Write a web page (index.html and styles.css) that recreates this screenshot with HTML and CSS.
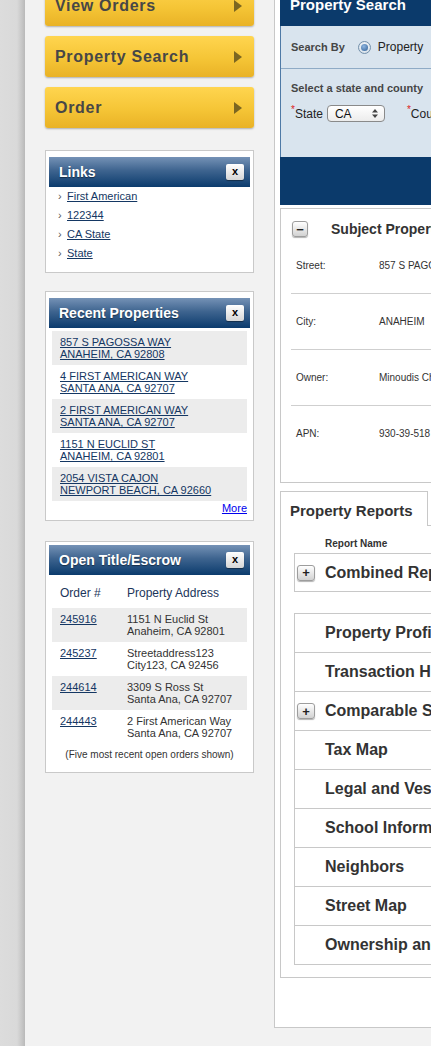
FILE: index.html
```html
<!DOCTYPE html>
<html lang="en">
<head>
<meta charset="utf-8">
<title>Property Search</title>
<link rel="stylesheet" href="styles.css">
</head>
<body>
<div class="page">
  <div class="strip"></div>
  <div class="content">
    <aside class="sidebar">
      <a class="nav-btn" href="#">View Orders<span class="arrow"></span></a>
      <a class="nav-btn" href="#">Property Search<span class="arrow"></span></a>
      <a class="nav-btn" href="#">Order<span class="arrow"></span></a>

      <section class="box box-links">
        <header class="box-head"><span>Links</span><span class="close">x</span></header>
        <ul class="links">
          <li><span class="chev">&#8250;</span><a href="#">First American</a></li>
          <li><span class="chev">&#8250;</span><a href="#">122344</a></li>
          <li><span class="chev">&#8250;</span><a href="#">CA State</a></li>
          <li><span class="chev">&#8250;</span><a href="#">State</a></li>
        </ul>
      </section>

      <section class="box box-recent">
        <header class="box-head"><span>Recent Properties</span><span class="close">x</span></header>
        <ul class="recent">
          <li><a href="#">857 S PAGOSSA WAY<br>ANAHEIM, CA 92808</a></li>
          <li><a href="#">4 FIRST AMERICAN WAY<br>SANTA ANA, CA 92707</a></li>
          <li><a href="#">2 FIRST AMERICAN WAY<br>SANTA ANA, CA 92707</a></li>
          <li><a href="#">1151 N EUCLID ST<br>ANAHEIM, CA 92801</a></li>
          <li><a href="#">2054 VISTA CAJON<br>NEWPORT BEACH, CA 92660</a></li>
        </ul>
        <div class="more"><a href="#">More</a></div>
      </section>

      <section class="box box-orders">
        <header class="box-head"><span>Open Title/Escrow</span><span class="close">x</span></header>
        <div class="orders-head"><span>Order #</span><span>Property Address</span></div>
        <ul class="orders">
          <li><a href="#">245916</a><span>1151 N Euclid St<br>Anaheim, CA 92801</span></li>
          <li><a href="#">245237</a><span>Streetaddress123<br>City123, CA 92456</span></li>
          <li><a href="#">244614</a><span>3309 S Ross St<br>Santa Ana, CA 92707</span></li>
          <li><a href="#">244443</a><span>2 First American Way<br>Santa Ana, CA 92707</span></li>
        </ul>
        <p class="note">(Five most recent open orders shown)</p>
      </section>
    </aside>

    <main class="panel">
      <section class="search">
        <h1 class="search-head">Property Search</h1>
        <div class="search-body">
          <div class="search-by">
            <span class="label-b">Search By</span>
            <span class="radio"><span class="radio-dot"></span></span>
            <span class="radio-text">Property</span>
          </div>
          <div class="state-sec">
            <div class="label-b">Select a state and county</div>
            <div class="state-row">
              <span class="req">*</span><span class="fld">State</span>
              <span class="select">CA
                <svg class="updown" width="6" height="9" viewBox="0 0 6 9"><path d="M3 0 L6 3.5 H0 Z M0 5.5 H6 L3 9 Z" fill="#444"/></svg>
              </span>
              <span class="req county">*</span><span class="fld">County</span>
            </div>
          </div>
        </div>
        <div class="search-foot"></div>
      </section>

      <section class="subject">
        <div class="subject-title"><span class="mini-btn">&minus;</span><span>Subject Property</span></div>
        <ul class="subject-rows">
          <li><span class="k">Street:</span><span>857 S PAGOSSA WAY</span></li>
          <li><span class="k">City:</span><span>ANAHEIM</span></li>
          <li><span class="k">Owner:</span><span>Minoudis Chris</span></li>
          <li><span class="k">APN:</span><span>930-39-518</span></li>
        </ul>
      </section>

      <section class="reports">
        <div class="tabs"><span class="tab">Property Reports</span></div>
        <div class="reports-body">
          <div class="col-head">Report Name</div>
          <div class="combined"><span class="mini-btn plus">+</span><span>Combined Report</span></div>
          <ul class="report-list">
            <li>Property Profile</li>
            <li>Transaction History</li>
            <li class="with-btn"><span class="mini-btn plus">+</span>Comparable Sales</li>
            <li>Tax Map</li>
            <li>Legal and Vesting</li>
            <li>School Information</li>
            <li>Neighbors</li>
            <li>Street Map</li>
            <li>Ownership and Encumbrance</li>
          </ul>
        </div>
      </section>
    </main>
  </div>
</div>
</body>
</html>
```

FILE: styles.css
```css
html, body {
  margin: 0;
  padding: 0;
  overflow: hidden;
  background: #f2f2f2;
  font-family: "Liberation Sans", Arial, Helvetica, sans-serif;
}

.page {
  display: flex;
  width: 431px;
  height: 1046px;
  overflow: hidden;
  background: #f2f2f2;
}

.strip {
  flex: none;
  width: 25px;
  background: linear-gradient(to right, #dcdcdc 0, #d9d9d9 17px, #c6c6c6 22px, #b9b9b9 25px);
}

.content {
  flex: none;
  display: flex;
  align-items: flex-start;
  gap: 20px;
  padding-left: 20px;
  margin-top: -20px;
}

/* ---------- sidebar ---------- */
.sidebar {
  flex: none;
  width: 209px;
  padding-top: 5px;
  display: flex;
  flex-direction: column;
}

.nav-btn {
  box-sizing: border-box;
  height: 41px;
  display: flex;
  align-items: center;
  justify-content: space-between;
  padding: 0 12px 0 10px;
  border-radius: 3px;
  background: linear-gradient(#ffd54f, #f5c536 55%, #e9b226);
  box-shadow: 0 1px 2px rgba(0, 0, 0, 0.28);
  color: #474747;
  font-weight: bold;
  font-size: 16px;
  letter-spacing: 0.7px;
  text-decoration: none;
}
.nav-btn + .nav-btn { margin-top: 10px; }

.arrow {
  width: 0;
  height: 0;
  border-left: 8px solid #7b6621;
  border-top: 6.5px solid transparent;
  border-bottom: 6.5px solid transparent;
}

.box {
  background: #fff;
  border: 1px solid #c9c9c9;
  padding: 6px 3px 3px;
}
.box-links { margin-top: 22px; }
.box-recent { margin-top: 18px; }
.box-orders { margin-top: 20px; padding-top: 3px; }

.box-head {
  height: 30px;
  display: flex;
  align-items: center;
  justify-content: space-between;
  padding: 0 6px 0 10px;
  background: linear-gradient(#7592b6, #3e648f 45%, #0b3b6d);
  color: #fff;
  font-weight: bold;
  font-size: 14px;
  text-shadow: 0 1px 1px rgba(0, 0, 0, 0.45);
}

.close {
  box-sizing: border-box;
  width: 18px;
  height: 16px;
  display: flex;
  align-items: center;
  justify-content: center;
  border-radius: 2px;
  background: linear-gradient(#ffffff, #d6d6d6);
  box-shadow: 0 1px 1px rgba(0, 0, 0, 0.4);
  color: #000;
  font-size: 11px;
  font-weight: bold;
  text-shadow: none;
  line-height: 1;
  padding-bottom: 1px;
}

a { color: #143763; }

.links {
  list-style: none;
  margin: 0;
  padding: 0 0 6px 9px;
  font-size: 11px;
  line-height: 19px;
}
.links li { display: flex; height: 19px; }
.chev {
  width: 9px;
  color: #555;
  font-size: 11px;
}

.recent {
  list-style: none;
  margin: 3px 3px 0;
  padding: 0;
  font-size: 11px;
  line-height: 12px;
}
.recent li {
  padding: 5px 8px;
}
.recent li:nth-child(odd) { background: #ececec; }

.more {
  text-align: right;
  font-size: 11px;
  line-height: 14px;
  padding: 0 3px 2px 0;
}
.more a { color: #0000ee; }

.orders-head {
  display: grid;
  grid-template-columns: 67px 1fr;
  padding: 11px 0 8px 8px;
  margin: 0 3px;
  font-size: 12px;
  line-height: 14px;
  color: #1b355b;
}

.orders {
  list-style: none;
  margin: 0 3px;
  padding: 0;
  font-size: 11px;
  line-height: 12px;
}
.orders li {
  display: grid;
  grid-template-columns: 67px 1fr;
  padding: 5px 0 5px 8px;
  color: #333;
}
.orders li:nth-child(odd) { background: #ececec; }

.note {
  margin: 4px 0 0;
  padding-bottom: 7px;
  text-align: center;
  font-size: 10px;
  line-height: 14px;
  color: #333;
}

/* ---------- main panel ---------- */
.panel {
  flex: none;
  width: 420px;
  background: #fff;
  border: 1px solid #c8c8c8;
  border-top: none;
  padding: 8px 0 49px 5px;
}

.search-head {
  margin: 0;
  height: 38px;
  box-sizing: border-box;
  padding: 8px 0 0 10px;
  background: #0b3a6b;
  color: #fff;
  font-size: 15px;
  line-height: 18px;
  font-weight: bold;
}

.search-body {
  background: #d9e4ee;
  border-left: 1px solid #4f7aa6;
  color: #222;
}

.label-b {
  font-weight: bold;
  font-size: 11px;
  color: #464646;
  line-height: 14px;
}

.search-by {
  height: 42px;
  display: flex;
  align-items: center;
  padding-left: 10px;
  border-bottom: 1px solid #8fabc6;
}
.radio {
  box-sizing: border-box;
  width: 13px;
  height: 13px;
  margin-left: 13px;
  border-radius: 50%;
  border: 1px solid #7390ab;
  background: radial-gradient(circle at 50% 40%, #ffffff, #c9d6e2);
  display: flex;
  align-items: center;
  justify-content: center;
}
.radio-dot {
  width: 7px;
  height: 7px;
  border-radius: 50%;
  background: radial-gradient(circle at 40% 35%, #8fb6e0, #2f5f96);
}
.radio-text {
  margin-left: 7px;
  font-size: 12px;
  color: #222;
}

.state-sec {
  height: 88px;
  box-sizing: border-box;
  padding: 12px 0 0 10px;
}
.state-row {
  display: flex;
  align-items: center;
  height: 17px;
  margin-top: 10px;
  font-size: 12px;
}
.req {
  color: #d22;
  font-size: 10px;
  align-self: flex-start;
  line-height: 10px;
}
.fld { color: #222; }
.select {
  box-sizing: border-box;
  width: 58px;
  height: 17px;
  margin-left: 4px;
  padding: 0 6px 0 7px;
  display: flex;
  align-items: center;
  justify-content: space-between;
  border: 1px solid #8a8a8a;
  border-radius: 4px;
  background: linear-gradient(#ffffff, #ececec);
  font-size: 12px;
  color: #111;
}
.county { margin-left: 22px; }

.search-foot {
  height: 48px;
  background: #0b3a6b;
}

.subject {
  margin-top: 3px;
  border: 1px solid #c8c8c8;
  padding-bottom: 21px;
}
.subject-title {
  display: flex;
  align-items: center;
  padding: 12px 0 1px 11px;
  font-weight: bold;
  font-size: 14px;
  color: #333;
}
.subject-title .mini-btn { margin-right: 23px; }

.mini-btn {
  box-sizing: border-box;
  width: 16px;
  height: 16px;
  display: inline-flex;
  align-items: center;
  justify-content: center;
  border: 1px solid #9d9d9d;
  border-radius: 3px;
  background: linear-gradient(#ffffff, #d2d2d2);
  box-shadow: 0 1px 1px rgba(0, 0, 0, 0.3);
  font-size: 13px;
  font-weight: bold;
  color: #222;
  line-height: 1;
}

.subject-rows {
  list-style: none;
  margin: 0 0 0 10px;
  padding: 0;
  font-size: 10px;
  color: #333;
}
.subject-rows li {
  height: 55px;
  display: flex;
  align-items: center;
  padding-left: 5px;
  border-bottom: 1px solid #cfcfcf;
}
.subject-rows li:last-child { border-bottom: none; }
.subject-rows .k { width: 83px; }

.reports { margin-top: 8px; }
.tabs { display: flex; }
.tab {
  position: relative;
  z-index: 1;
  box-sizing: border-box;
  width: 148px;
  height: 35px;
  padding: 3px 0 0 9px;
  display: flex;
  align-items: center;
  border: 1px solid #c8c8c8;
  border-bottom: none;
  background: #fff;
  font-weight: bold;
  font-size: 15px;
  color: #333;
}
.reports-body {
  margin-top: -1px;
  border: 1px solid #c8c8c8;
  padding: 12px 0 12px 13px;
}
.col-head {
  padding-left: 31px;
  font-weight: bold;
  font-size: 10px;
  line-height: 12px;
  color: #333;
}
.combined {
  box-sizing: border-box;
  height: 39px;
  margin-top: 3px;
  display: flex;
  align-items: center;
  padding-left: 2px;
  border: 1px solid #c8c8c8;
  border-right: none;
  font-weight: bold;
  font-size: 16px;
  color: #333;
}
.combined .mini-btn, .with-btn .mini-btn { margin-right: 10px; width: 18px; }

.report-list {
  list-style: none;
  margin: 21px 0 0;
  padding: 0;
  border: 1px solid #c8c8c8;
  border-right: none;
  font-weight: bold;
  font-size: 16px;
  color: #333;
}
.report-list li {
  height: 38px;
  display: flex;
  align-items: center;
  padding-left: 30px;
  border-bottom: 1px solid #c8c8c8;
  white-space: nowrap;
}
.report-list li:last-child { border-bottom: none; }
.report-list li.with-btn { padding-left: 2px; }
```
